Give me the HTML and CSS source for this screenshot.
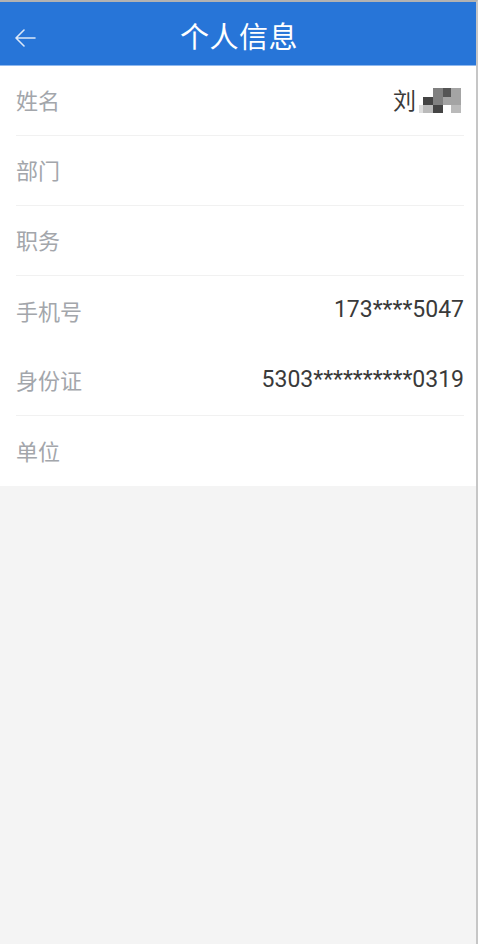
FILE: index.html
```html
<!DOCTYPE html>
<html lang="zh">
<head>
    <meta charset="UTF-8">
    <meta name="viewport" content="width=device-width, initial-scale=1.0">
    <title>个人信息</title>
    <link rel="stylesheet" href="styles.css">
</head>
<body>
    <div class="screen">
        <div class="nav-bar">
            <span class="back">
                <svg width="22" height="18" viewBox="0 0 22 18">
                    <path d="M21 9H2M10 1L2 9l8 8" fill="none" stroke="#dce8f8" stroke-width="1.6" stroke-linecap="round" stroke-linejoin="round"/>
                </svg>
            </span>
            <h1 class="title">个人信息</h1>
        </div>

        <div class="info-list">
            <div class="row line">
                <span class="label">姓名</span>
                <span class="value">刘
                    <span class="mosaic">
                        <i></i><i></i><i class="c3"></i><i class="c1"></i><i class="c4"></i>
                        <i></i><i class="c0"></i><i class="c3"></i><i class="c4"></i><i class="c4"></i>
                        <i class="c6"></i><i class="c5"></i><i class="c0"></i><i></i><i class="c5"></i>
                    </span>
                </span>
            </div>
            <div class="row line">
                <span class="label">部门</span>
                <span class="value"></span>
            </div>
            <div class="row line">
                <span class="label">职务</span>
                <span class="value"></span>
            </div>
            <div class="row">
                <span class="label">手机号</span>
                <span class="value">173****5047</span>
            </div>
            <div class="row line">
                <span class="label">身份证</span>
                <span class="value">5303**********0319</span>
            </div>
            <div class="row">
                <span class="label">单位</span>
                <span class="value"></span>
            </div>
        </div>
    </div>
</body>
</html>
```

FILE: styles.css
```css
body {
    margin: 0;
    font-family: Roboto, "Noto Sans CJK SC", sans-serif;
    background: #fff;
}

.screen {
    width: 476px;
    height: 942px;
    border-top: 2px solid #b2b2b2;
    border-right: 2px solid #c6c6c6;
    background: #f4f4f4;
    overflow: hidden;
}

/* --- 顶部导航 --- */
.nav-bar {
    height: 63px;
    background: #2775d8;
    border-bottom: 1px solid #8fb8ee;
    display: flex;
    align-items: center;
    justify-content: center;
    position: relative;
}

.back {
    position: absolute;
    left: 14px;
    top: 27px;
    display: flex;
}

.title {
    margin: 3px 0 0 2px;
    color: #fff;
    font-size: 29px;
    font-weight: normal;
    letter-spacing: 0.5px;
}

/* --- 信息列表 --- */
.info-list {
    background: #fff;
    padding: 0 12px 0 16px;
}

.row {
    height: 70px;
    display: flex;
    align-items: center;
    justify-content: space-between;
    box-sizing: border-box;
}

.row.line {
    border-bottom: 1px solid #f1f1f1;
}

.label {
    font-size: 22px;
    color: #a3a6ab;
    margin-top: -3px;
}

.value {
    font-size: 23px;
    color: #3a3a3a;
    display: flex;
    align-items: center;
    margin-top: -3px;
}

.mosaic {
    display: grid;
    grid-template-columns: 4px 10px 10px 8px 10px;
    grid-template-rows: 9px 8px 8px;
    margin: 2px 3px 0 3px;
}

.mosaic i { background: transparent; }
.mosaic .c0 { background: #444; }
.mosaic .c1 { background: #555; }
.mosaic .c3 { background: #808080; }
.mosaic .c4 { background: #a4a4a4; }
.mosaic .c5 { background: #bababa; }
.mosaic .c6 { background: #dedede; }
```
